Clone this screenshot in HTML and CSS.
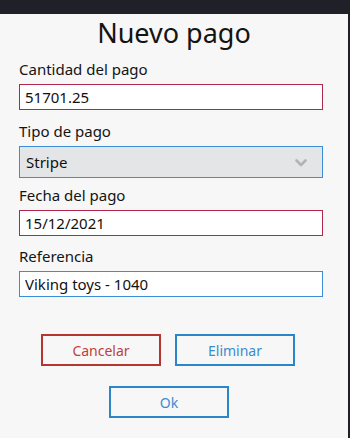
FILE: index.html
```html
<!DOCTYPE html>
<html lang="es">
<head>
  <meta charset="UTF-8" />
  <title>Nuevo pago</title>
  <link rel="stylesheet" href="styles.css">
</head>
<body>

<div id="dialog">
  <h1 id="title">Nuevo pago</h1>

  <div class="field">
    <label for="amount">Cantidad del pago</label>
    <input id="amount" class="input required" type="text" value="51701.25">
  </div>

  <div class="field field-select">
    <label for="type">Tipo de pago</label>
    <div class="selectWrap">
      <select id="type" class="select">
        <option>Stripe</option>
        <option>Transferencia</option>
        <option>Efectivo</option>
      </select>
      <svg class="chevron" width="12" height="8" viewBox="0 0 12 8">
        <path d="M1.5 1.5 L6 6 L10.5 1.5" fill="none" stroke="#b3b3b3" stroke-width="2.6" stroke-linecap="round" stroke-linejoin="round"/>
      </svg>
    </div>
  </div>

  <div class="field field-date">
    <label for="date">Fecha del pago</label>
    <input id="date" class="input required" type="text" value="15/12/2021">
  </div>

  <div class="field">
    <label for="ref">Referencia</label>
    <input id="ref" class="input" type="text" value="Viking toys - 1040">
  </div>

  <div id="actions">
    <button class="btn btn-red">Cancelar</button>
    <button class="btn btn-blue">Eliminar</button>
  </div>
  <div id="okRow">
    <button class="btn btn-blue">Ok</button>
  </div>
</div>

</body>
</html>
```

FILE: styles.css
```css
body {
  margin: 0;
  padding: 0;
  background: #1f2028;
  font-family: "Noto Sans", sans-serif;
}

#dialog {
  margin-top: 2px;
  width: 348px;
  height: 436px;
  box-sizing: border-box;
  padding: 0 25px 0 19px;
  background: #f7f7f7;
  color: #141414;
}

#title {
  margin: 14px 0 7px 0;
  font-size: 27px;
  font-weight: 400;
  line-height: 38px;
  text-align: center;
  padding-left: 6px;
}

.field {
  display: flex;
  flex-direction: column;
  margin-bottom: 11px;
}

.field-select {
  margin-bottom: 7px;
}

.field-date {
  margin-bottom: 10px;
}

.field label {
  font-size: 15px;
  line-height: 20px;
  margin-bottom: 5px;
}

.input {
  box-sizing: border-box;
  width: 304px;
  height: 26px;
  margin: 0;
  padding: 0 5px;
  border: 1px solid #3b8ed5;
  background: white;
  font-family: "Noto Sans", sans-serif;
  font-size: 15px;
  color: #111;
  outline: none;
}

.input.required {
  border-color: #b0284e;
}

.selectWrap {
  position: relative;
  width: 304px;
}

.select {
  appearance: none;
  -webkit-appearance: none;
  box-sizing: border-box;
  width: 304px;
  height: 32px;
  margin: 0;
  padding: 0 6px;
  border: 1px solid #3b8ed5;
  border-radius: 0;
  background: #e4e5e7;
  font-family: "Noto Sans", sans-serif;
  font-size: 15px;
  color: #111;
  outline: none;
}

.chevron {
  position: absolute;
  right: 16px;
  top: 13px;
}

#actions {
  display: flex;
  justify-content: center;
  gap: 14px;
  margin-top: 37px;
  padding-right: 6px;
}

#okRow {
  display: flex;
  justify-content: center;
  margin-top: 20px;
  padding-right: 4px;
}

.btn {
  box-sizing: border-box;
  width: 120px;
  height: 32px;
  background: transparent;
  border: 2px solid #2a86c9;
  color: #3a8cd0;
  font-family: "Noto Sans", sans-serif;
  font-size: 14px;
  cursor: pointer;
}

.btn-red {
  border-color: #b53530;
  color: #bf3f3b;
}
```
